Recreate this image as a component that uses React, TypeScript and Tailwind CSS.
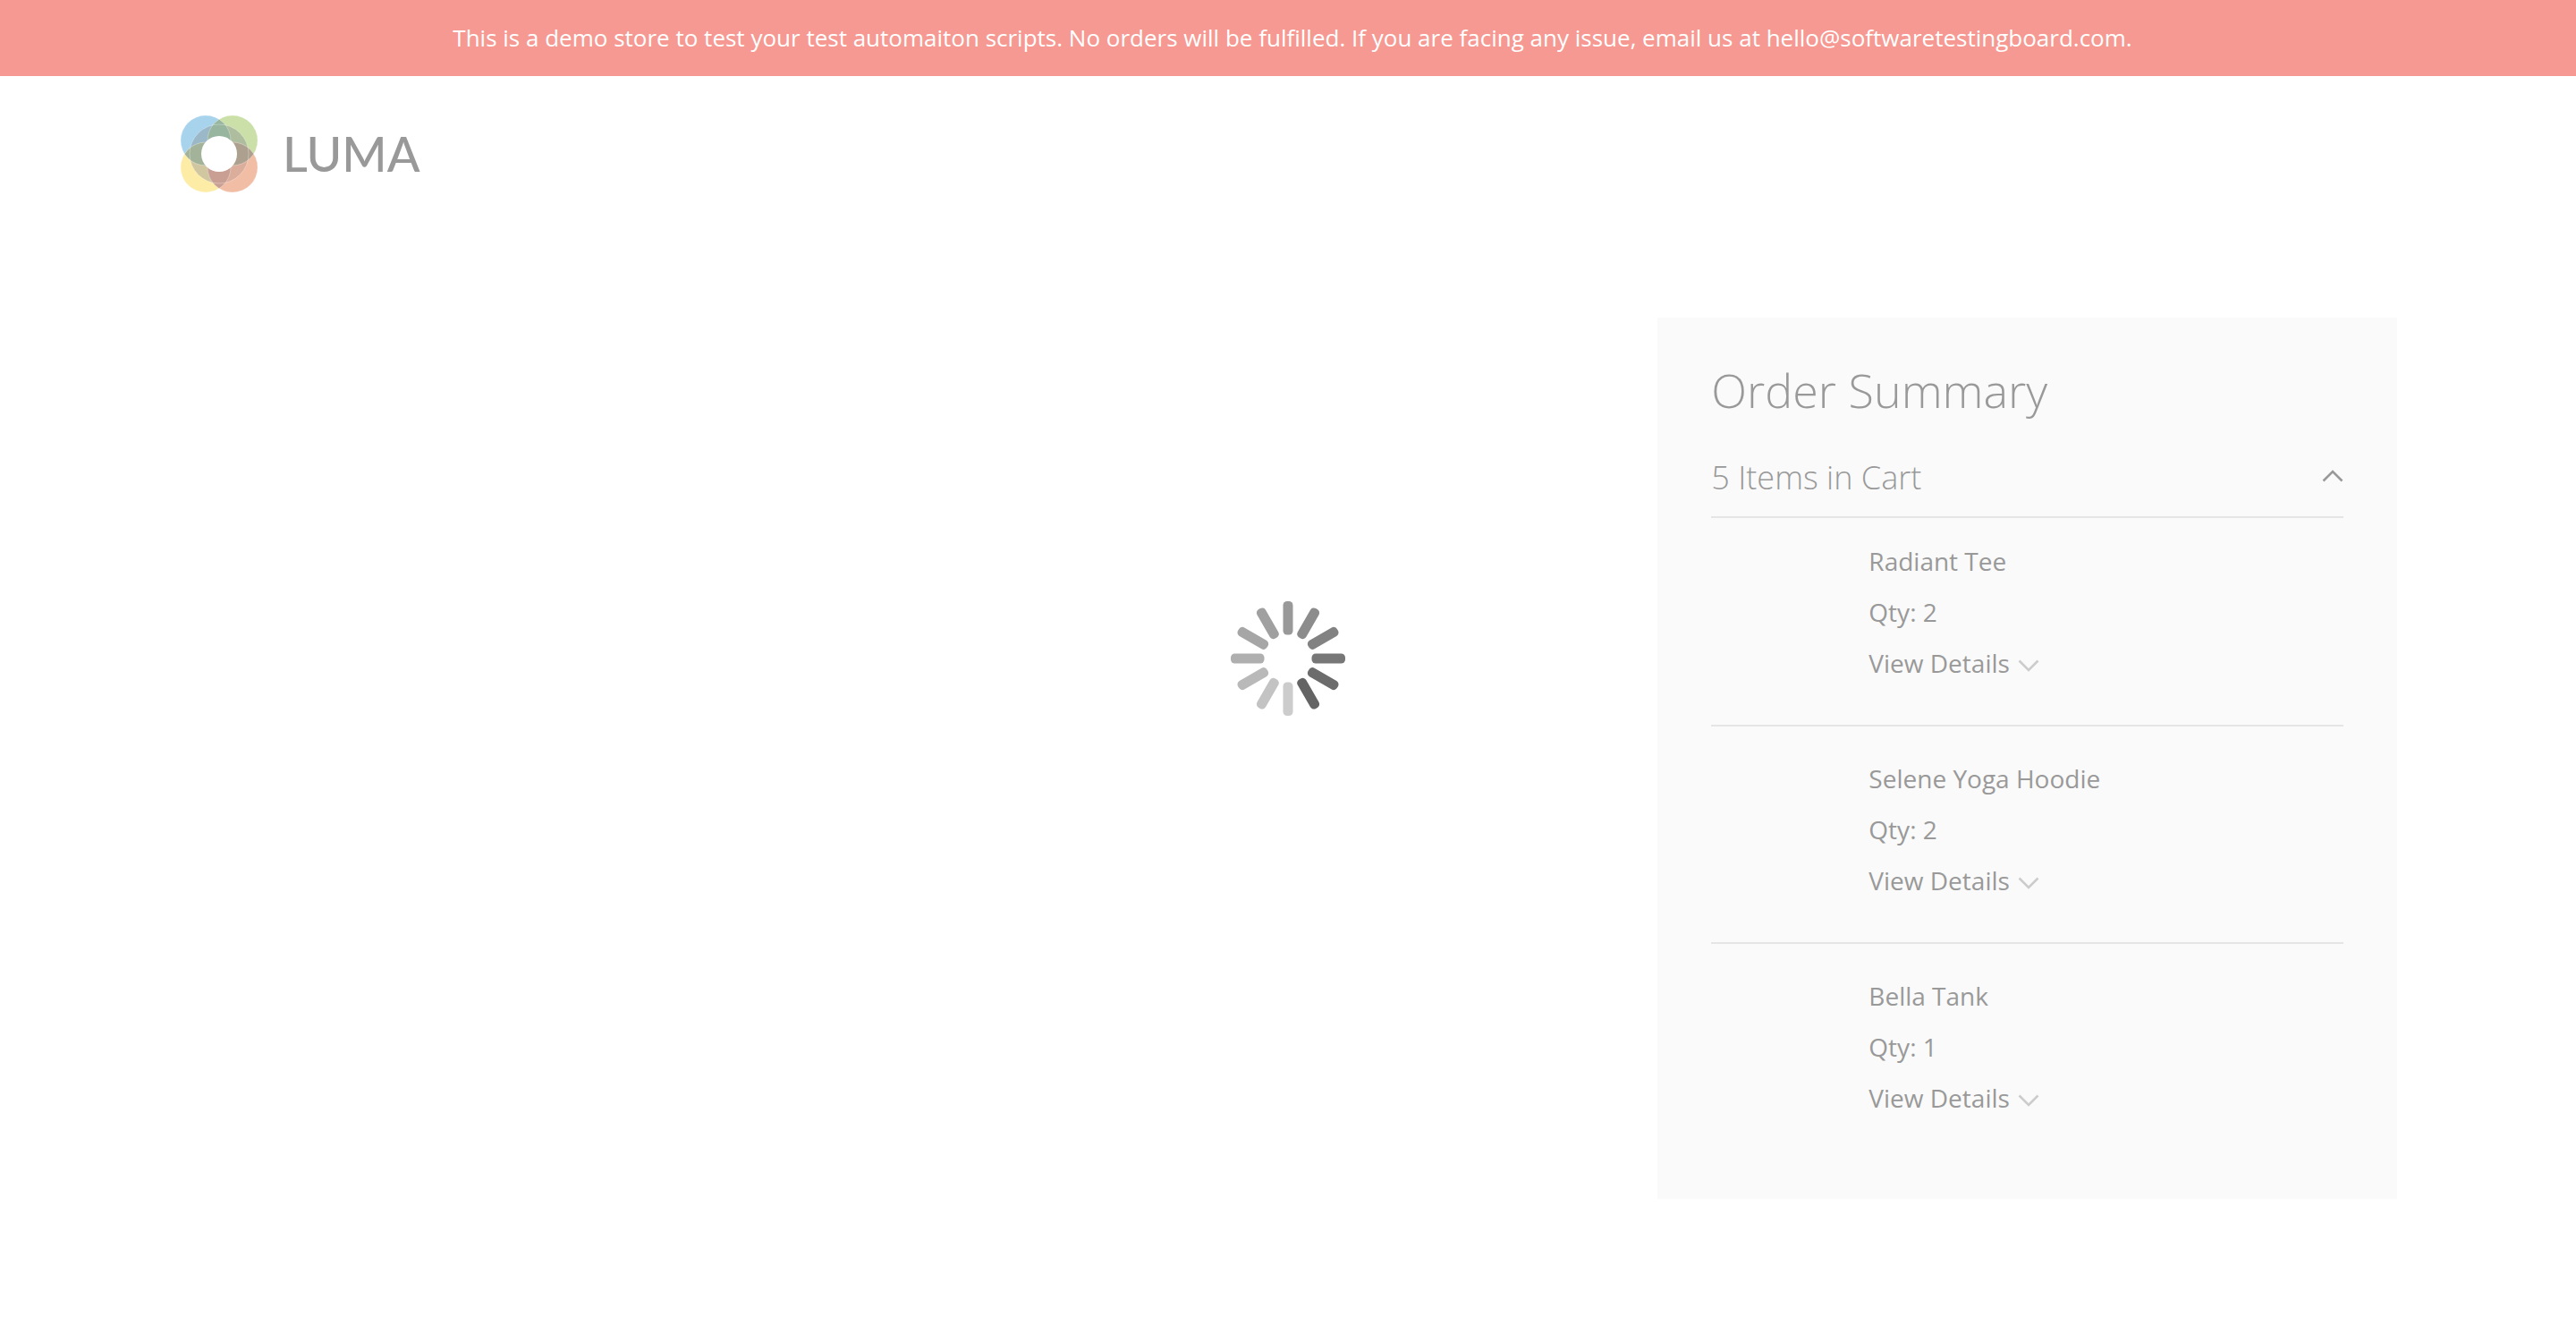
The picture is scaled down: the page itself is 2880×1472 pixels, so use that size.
import { useState } from "react";

const items = [
  { name: "Radiant Tee", qty: 2 },
  { name: "Selene Yoga Hoodie", qty: 2 },
  { name: "Bella Tank", qty: 1 },
];

const spokes = [
  "#999999", "#8c8c8c", "#828282", "#777777", "#6c6c6c", "#646464",
  "#cccccc", "#c3c3c3", "#b9b9b9", "#afafaf", "#a6a6a6", "#a0a0a0",
];

function LumaMark() {
  return (
    <svg viewBox="0 0 86 86" className="size-[86px]" aria-hidden="true">
      <defs>
        <clipPath id="tl"><circle cx="28" cy="28" r="28" /></clipPath>
        <clipPath id="tr"><circle cx="58" cy="28" r="28" /></clipPath>
        <clipPath id="bl"><circle cx="28" cy="58" r="28" /></clipPath>
        <clipPath id="br"><circle cx="58" cy="58" r="28" /></clipPath>
        <clipPath id="all">
          <circle cx="28" cy="28" r="28" />
          <circle cx="58" cy="28" r="28" />
          <circle cx="28" cy="58" r="28" />
          <circle cx="58" cy="58" r="28" />
        </clipPath>
      </defs>
      <circle cx="28" cy="28" r="28" fill="#a8d3ec" />
      <circle cx="58" cy="28" r="28" fill="#cbe0a8" />
      <circle cx="28" cy="58" r="28" fill="#fdeca6" />
      <circle cx="58" cy="58" r="28" fill="#f2bda5" />
      <circle cx="43" cy="43" r="33" fill="#9bb8c9" clipPath="url(#tl)" />
      <circle cx="43" cy="43" r="33" fill="#afbd9f" clipPath="url(#tr)" />
      <circle cx="43" cy="43" r="33" fill="#d0c7a1" clipPath="url(#bl)" />
      <circle cx="43" cy="43" r="33" fill="#dbae9b" clipPath="url(#br)" />
      <circle cx="58" cy="28" r="28" fill="#97b59f" clipPath="url(#tl)" />
      <circle cx="28" cy="58" r="28" fill="#a2b39a" clipPath="url(#tl)" />
      <circle cx="58" cy="58" r="28" fill="#ada08f" clipPath="url(#tr)" />
      <circle cx="58" cy="58" r="28" fill="#c99f93" clipPath="url(#bl)" />
      <g fill="none" stroke="#ffffff" strokeOpacity="0.3" clipPath="url(#all)">
        <circle cx="28" cy="28" r="28" />
        <circle cx="58" cy="28" r="28" />
        <circle cx="28" cy="58" r="28" />
        <circle cx="58" cy="58" r="28" />
        <circle cx="43" cy="43" r="33" />
      </g>
      <circle cx="43" cy="43" r="20" fill="#ffffff" />
    </svg>
  );
}

function Chevron({ up = false, className = "" }: { up?: boolean; className?: string }) {
  return (
    <svg viewBox="0 0 24 14" className={`h-[14px] w-6 ${className}`} fill="none" stroke="currentColor" strokeWidth="2.6" aria-hidden="true">
      <path d={up ? "M1.5 12.5 12 2l10.5 10.5" : "M1.5 1.5 12 12 22.5 1.5"} />
    </svg>
  );
}

function Spinner() {
  return (
    <svg viewBox="-64 -64 128 128" className="size-32" role="img" aria-label="Loading">
      {spokes.map((color, i) => (
        <rect key={color} x="-5.5" y="-64" width="11" height="37.5" rx="4.5" fill={color} transform={`rotate(${i * 30})`} />
      ))}
    </svg>
  );
}

export default function App() {
  const [open, setOpen] = useState(true);
  return (
    <div className="min-h-screen bg-white font-['Open_Sans',sans-serif] text-[28px] leading-[57px] text-[#999999]">
      <p className="bg-[#f69992] py-6 pr-10 pl-[50px] text-center text-[26px] leading-[37px] text-white">
        This is a demo store to test your test automaiton scripts. No orders will be fulfilled. If you are facing any
        issue, email us at hello@softwaretestingboard.com.
      </p>
      <div className="mx-auto max-w-[2560px] px-10">
        <header className="pt-11">
          <a href="#" aria-label="Luma" className="inline-flex items-center gap-7 pl-0.5">
            <LumaMark />
            <span className="font-['Lato',sans-serif] text-[54px] leading-[84px] font-medium">LUMA</span>
          </a>
        </header>
        <main className="flex justify-end pt-[122px]">
          <aside className="w-1/3 bg-[#fafafa] px-[60px] pt-11 pb-11">
            <h1 className="text-[52px] leading-[74px] font-light">Order Summary</h1>
            <button
              type="button"
              aria-expanded={open}
              onClick={() => setOpen(!open)}
              className="mt-9 flex w-full items-center justify-between border-b-2 border-[#e5e5e5] pb-[18px] text-left text-[36px] leading-[50px] font-light"
            >
              5 Items in Cart
              <Chevron up={open} className="mb-1" />
            </button>
            {open && (
              <ul className="divide-y-2 divide-[#e5e5e5]">
                {items.map((item) => (
                  <li key={item.name} className="pt-[30px] pb-10 pl-44 first:pt-5">
                    <p>{item.name}</p>
                    <p>Qty: {item.qty}</p>
                    <button type="button" className="flex items-center gap-[9px]">
                      View Details
                      <Chevron className="mt-1 text-[#cccccc]" />
                    </button>
                  </li>
                ))}
              </ul>
            )}
          </aside>
        </main>
      </div>
      <div className="pointer-events-none fixed inset-0 flex items-center justify-center">
        <Spinner />
      </div>
    </div>
  );
}
